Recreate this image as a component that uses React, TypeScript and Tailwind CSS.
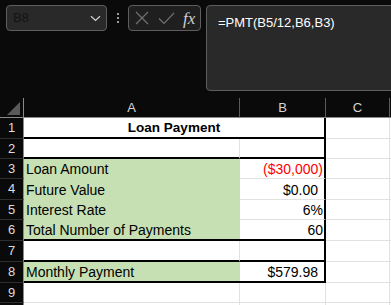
import React from 'react';

const font = { fontFamily: '"Liberation Sans", Arial, sans-serif' };

type Row = {
  n: number;
  h: string;
  a?: string;
  b?: string;
  green?: boolean;
  thick?: boolean;
  red?: boolean;
  pad?: boolean;
};

const rows: Row[] = [
  { n: 2, h: 'h-[20px]', thick: true },
  { n: 3, h: 'h-[20px]', a: 'Loan Amount', b: '($30,000)', green: true, red: true },
  { n: 4, h: 'h-[21px]', a: 'Future Value', b: '$0.00', green: true, pad: true },
  { n: 5, h: 'h-[20px]', a: 'Interest Rate', b: '6%', green: true },
  { n: 6, h: 'h-[21px]', a: 'Total Number of Payments', b: '60', green: true, thick: true },
  { n: 7, h: 'h-[21px]', thick: true },
  { n: 8, h: 'h-[21px]', a: 'Monthly Payment', b: '$579.98', green: true, thick: true, pad: true },
];

function RowNum({ n, h }: { n?: number; h: string }) {
  return (
    <div className={`${h} w-[24px] shrink-0 bg-[#0a0a0a] border-r border-r-[#8a8a8a] border-b border-b-[#2e2e2e] flex items-center justify-center text-[13px] text-[#dcdcdc]`}>
      {n}
    </div>
  );
}

function CellC({ h }: { h: string }) {
  return <div className={`${h} w-[64px] shrink-0 bg-white border-r border-b border-[#e1e1e1]`} />;
}

export default function App() {
  return (
    <div className="w-[391px] h-[305px] overflow-hidden bg-[#0a0a0a]" style={font}>
      {/* toolbar */}
      <div className="h-[98px] flex items-start pt-[5px] pl-[6px]">
        <div className="w-[101px] h-[26px] shrink-0 rounded-[4px] border border-[#5e5e5e] bg-[#292929] flex items-center justify-between pl-[6px] pr-[5px]">
          <span className="text-[13px] text-[#141414]">B8</span>
          <svg width="11" height="7" viewBox="0 0 11 7" fill="none">
            <path d="M1 1.2 L5.5 5.5 L10 1.2" stroke="#d0d0d0" strokeWidth="1.2" />
          </svg>
        </div>
        <div className="w-[21px] h-[26px] shrink-0 flex flex-col items-center justify-center gap-[2px]">
          <span className="w-[2px] h-[2px] bg-[#9a9a9a]" />
          <span className="w-[2px] h-[2px] bg-[#9a9a9a]" />
          <span className="w-[2px] h-[2px] bg-[#9a9a9a]" />
        </div>
        <div className="w-[73px] h-[26px] shrink-0 rounded-[4px] border border-[#5e5e5e] bg-[#1f1f1f] flex items-center pl-[6px]">
          <svg width="14" height="14" viewBox="0 0 14 14" fill="none">
            <path d="M1 1 L13 13 M13 1 L1 13" stroke="#737373" strokeWidth="1.1" />
          </svg>
          <svg className="ml-[9px]" width="17" height="13" viewBox="0 0 17 13" fill="none">
            <path d="M1 6.5 L6 11.5 L16 1" stroke="#737373" strokeWidth="1.1" />
          </svg>
          <span className="ml-[8px] text-[17px] italic text-[#cfcfcf] leading-none" style={{ fontFamily: '"Liberation Serif", "Times New Roman", serif' }}>
            fx
          </span>
        </div>
        <div className="ml-[5px] w-[200px] h-[86px] shrink-0 rounded-[4px] border border-[#5e5e5e] bg-[#292929] pl-[11px] pt-[4px]">
          <span className="text-[13px] text-white">=PMT(B5/12,B6,B3)</span>
        </div>
      </div>

      {/* column headers */}
      <div className="flex h-[20px]">
        <div className="w-[24px] shrink-0 border-r border-b border-[#8a8a8a] relative">
          <svg className="absolute right-[3px] bottom-[2px]" width="13" height="13" viewBox="0 0 13 13">
            <path d="M13 0 L13 13 L0 13 Z" fill="#5a5a5a" />
          </svg>
        </div>
        <div className="w-[216px] shrink-0 border-r border-r-[#5a5a5a] border-b border-b-[#8a8a8a] flex items-center justify-center text-[13px] text-[#d6d6d6]">A</div>
        <div className="w-[86px] shrink-0 border-r border-r-[#5a5a5a] border-b border-b-[#8a8a8a] flex items-center justify-center text-[13px] text-[#d6d6d6]">B</div>
        <div className="w-[64px] shrink-0 border-r border-r-[#5a5a5a] border-b border-b-[#8a8a8a] flex items-center justify-center text-[13px] text-[#d6d6d6]">C</div>
        <div className="flex-1 border-b border-b-[#8a8a8a]" />
      </div>

      {/* row 1 */}
      <div className="flex">
        <RowNum n={1} h="h-[21px]" />
        <div className="h-[21px] w-[302px] shrink-0 bg-white border-r-2 border-b-2 border-black flex items-end justify-center font-bold text-[13.5px] leading-4 text-black pb-[1px]">
          Loan Payment
        </div>
        <CellC h="h-[21px]" />
        <div className="flex-1 bg-white border-b border-[#e1e1e1]" />
      </div>

      {rows.map((r) => (
        <div key={r.n} className="flex">
          <RowNum n={r.n} h={r.h} />
          <div
            className={`${r.h} w-[216px] shrink-0 flex items-end pl-[2px] pb-[1px] text-[14px] leading-4 text-black ${
              r.green ? 'bg-[#c6e0b4]' : 'bg-white border-r border-r-[#e1e1e1]'
            } ${r.thick ? 'border-b-2 border-b-black' : r.green ? 'border-b border-b-[#c6e0b4]' : 'border-b border-b-[#e1e1e1]'}`}
          >
            {r.a}
          </div>
          <div
            className={`${r.h} w-[86px] shrink-0 bg-white border-r-2 border-r-black flex items-end justify-end pb-[1px] text-[14px] leading-4 ${
              r.red ? 'text-[#ff0000]' : 'text-black'
            } ${r.pad ? 'pr-[6px]' : 'pr-[1px]'} ${r.thick ? 'border-b-2 border-b-black' : 'border-b border-b-[#e1e1e1]'}`}
          >
            {r.b}
          </div>
          <CellC h={r.h} />
          <div className="flex-1 bg-white border-b border-[#e1e1e1]" />
        </div>
      ))}

      {[9, undefined].map((n, i) => (
        <div key={i} className="flex">
          <RowNum n={n} h="h-[20px]" />
          <div className="h-[20px] w-[216px] shrink-0 bg-white border-r border-b border-[#e1e1e1]" />
          <div className="h-[20px] w-[86px] shrink-0 bg-white border-r border-b border-[#e1e1e1]" />
          <CellC h="h-[20px]" />
          <div className="flex-1 bg-white border-b border-[#e1e1e1]" />
        </div>
      ))}
    </div>
  );
}
